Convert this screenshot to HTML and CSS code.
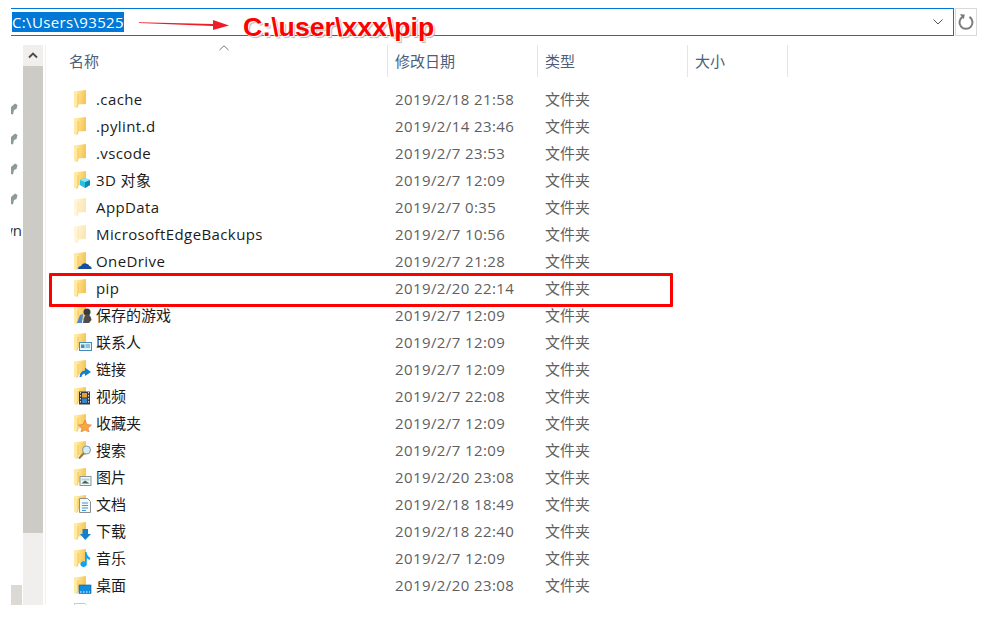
FILE: index.html
```html
<!DOCTYPE html>
<html lang="zh-CN">
<head>
<meta charset="utf-8">
<title>文件资源管理器</title>
<link rel="stylesheet" href="styles.css">
</head>
<body>
<svg class="defs" width="0" height="0" aria-hidden="true">
  <defs>
    <linearGradient id="fg" x1="0" y1="0" x2="1" y2="0.2">
      <stop offset="0" stop-color="#fff0b0"/><stop offset="0.5" stop-color="#fddc7c"/><stop offset="1" stop-color="#f6c45a"/>
    </linearGradient>
    <symbol id="folder" viewBox="0 0 18 18">
      <path d="M0 1.500 L12 0 V14 L4 14.500 L3 17.500 L0 17 Z" fill="url(#fg)"/>
      <path d="M0 1.500 H3.500 L4 4 V14.500 L3 17.500 L0 17 Z" fill="#ffe9a3"/>
      <path d="M4 4 V14.500 L3 17.500" fill="none" stroke="#f3c35a" stroke-width="1"/>
    </symbol>
  </defs>
</svg>
<div class="page">
  <div class="topbar">
    <div class="address">
      <span class="selected">C:\Users\93525</span>
      <svg class="chev" width="12" height="8" viewBox="0 0 12 8"><path d="M1.500 1.500 L6 6 L10.500 1.500" fill="none" stroke="#555" stroke-width="1"/></svg>
    </div>
    <div class="refresh">
      <svg width="18" height="18" viewBox="0 0 18 18"><path d="M5.500 3.800 A6.500 6.500 0 1 0 12.500 3.800" fill="none" stroke="#7b7b7b" stroke-width="2"/><path d="M2.800 1.200 L7.800 1.600 L6.800 6.200 Z" fill="#7b7b7b"/></svg>
    </div>
  </div>

  <div class="main">
    <aside class="nav">
      <div class="pins">
        <svg class="pin" width="8" height="12" viewBox="0 0 8 12"><path d="M1 4 L5 0.500 L7.500 2 L6.500 6 L4 7 L3 11.500 L1 11 Z" fill="#8d9a96"/></svg>
        <svg class="pin" width="8" height="12" viewBox="0 0 8 12"><path d="M1 4 L5 0.500 L7.500 2 L6.500 6 L4 7 L3 11.500 L1 11 Z" fill="#8d9a96"/></svg>
        <svg class="pin" width="8" height="12" viewBox="0 0 8 12"><path d="M1 4 L5 0.500 L7.500 2 L6.500 6 L4 7 L3 11.500 L1 11 Z" fill="#8d9a96"/></svg>
        <svg class="pin" width="8" height="12" viewBox="0 0 8 12"><path d="M1 4 L5 0.500 L7.500 2 L6.500 6 L4 7 L3 11.500 L1 11 Z" fill="#8d9a96"/></svg>
        <div class="navlabel"><span>wn</span></div>
      </div>
      <div class="hthumb"></div>
    </aside>
    <div class="vscroll">
      <div class="vup"><svg width="10" height="7" viewBox="0 0 10 7"><path d="M1 5.500 L5 1.500 L9 5.500" fill="none" stroke="#4a4a4a" stroke-width="1.800"/></svg></div>
      <div class="vthumb"></div>
    </div>
    <section class="list">
      <div class="head">
        <svg class="sortcaret" width="10" height="6" viewBox="0 0 10 6"><path d="M0.500 5 L5 0.800 L9.500 5" fill="none" stroke="#777" stroke-width="1"/></svg>
        <div class="hcell hname">名称</div>
        <div class="hcell">修改日期</div>
        <div class="hcell">类型</div>
        <div class="hcell">大小</div>
      </div>
      <div class="rows">
        <div class="row"><svg class="ico" width="18" height="18"><use href="#folder"/></svg><span class="name">.cache</span><span class="date">2019/2/18 21:58</span><span class="type">文件夹</span></div>
        <div class="row"><svg class="ico" width="18" height="18"><use href="#folder"/></svg><span class="name">.pylint.d</span><span class="date">2019/2/14 23:46</span><span class="type">文件夹</span></div>
        <div class="row"><svg class="ico" width="18" height="18"><use href="#folder"/></svg><span class="name">.vscode</span><span class="date">2019/2/7 23:53</span><span class="type">文件夹</span></div>
        <div class="row"><svg class="ico" width="18" height="18"><use href="#folder"/><path d="M11 7 L16 9 V14 L11 17 L6 14 V9 Z" fill="#27c0e0"/><path d="M11 11 L16 9 V14 L11 17 Z" fill="#0e86b8"/><path d="M6 9 L11 7 L16 9 L11 11 Z" fill="#8fe6f5"/></svg><span class="name">3D 对象</span><span class="date">2019/2/7 12:09</span><span class="type">文件夹</span></div>
        <div class="row"><svg class="ico faded" width="18" height="18"><use href="#folder"/></svg><span class="name">AppData</span><span class="date">2019/2/7 0:35</span><span class="type">文件夹</span></div>
        <div class="row"><svg class="ico faded" width="18" height="18"><use href="#folder"/></svg><span class="name">MicrosoftEdgeBackups</span><span class="date">2019/2/7 10:56</span><span class="type">文件夹</span></div>
        <div class="row"><svg class="ico" width="18" height="18"><use href="#folder"/><path d="M4 17 Q4 14 7 14 Q8.500 10.500 12 11.500 Q15 12 15.500 14 Q18 14.500 17.500 17 Z" fill="#164f9e"/></svg><span class="name">OneDrive</span><span class="date">2019/2/7 21:28</span><span class="type">文件夹</span></div>
        <div class="row"><svg class="ico" width="18" height="18"><use href="#folder"/></svg><span class="name">pip</span><span class="date">2019/2/20 22:14</span><span class="type">文件夹</span></div>
        <div class="row"><svg class="ico" width="18" height="18"><use href="#folder"/><circle cx="13" cy="6" r="3.500" fill="#3b3b3b"/><path d="M9 17 Q10 9 13 8 Q17 9 17.500 14 L15 17 Z" fill="#4c4c4c"/><path d="M3 17 L6 9 L9 8 L8 17 Z" fill="#4d87c7"/></svg><span class="name cjk">保存的游戏</span><span class="date">2019/2/7 12:09</span><span class="type">文件夹</span></div>
        <div class="row"><svg class="ico" width="18" height="18"><use href="#folder"/><rect x="5.500" y="9.500" width="12" height="8" fill="#e8f2f8" stroke="#3f8fb8"/><rect x="7" y="11.500" width="3.500" height="3.500" fill="#3f8fb8"/><path d="M11.500 12 H16 M11.500 14 H16" stroke="#3f8fb8"/></svg><span class="name cjk">联系人</span><span class="date">2019/2/7 12:09</span><span class="type">文件夹</span></div>
        <div class="row"><svg class="ico" width="18" height="18"><use href="#folder"/><path d="M5.500 17 Q6 11 11 10.500 V7.500 L17 12 L11 16 V13.500 Q8 13.500 7.500 17 Z" fill="#1380cf"/></svg><span class="name cjk">链接</span><span class="date">2019/2/7 12:09</span><span class="type">文件夹</span></div>
        <div class="row"><svg class="ico" width="18" height="18"><use href="#folder"/><rect x="5" y="4.500" width="11" height="13" fill="#3a3a3a"/><rect x="8" y="6" width="5" height="4.500" fill="#e2a13d"/><rect x="8" y="11.500" width="5" height="4.500" fill="#3b85c4"/><path d="M6.500 5 V17 M14.500 5 V17" stroke="#d8d8d8" stroke-dasharray="1.500 1.500"/></svg><span class="name cjk">视频</span><span class="date">2019/2/7 22:08</span><span class="type">文件夹</span></div>
        <div class="row"><svg class="ico" width="18" height="18"><use href="#folder"/><path d="M11 6 L13 10.500 L17.500 11 L14 14 L15 18 L11 16 L7 18 L8 14 L4.500 11 L9 10.500 Z" fill="#f7a83a" stroke="#e5723a" stroke-width=".6"/></svg><span class="name cjk">收藏夹</span><span class="date">2019/2/7 12:09</span><span class="type">文件夹</span></div>
        <div class="row"><svg class="ico" width="18" height="18"><use href="#folder"/><path d="M5 17.500 L10 12" stroke="#8a7a55" stroke-width="2"/><circle cx="12.500" cy="9" r="4" fill="#d8ecf6" stroke="#7d97a8"/></svg><span class="name cjk">搜索</span><span class="date">2019/2/7 12:09</span><span class="type">文件夹</span></div>
        <div class="row"><svg class="ico" width="18" height="18"><use href="#folder"/><rect x="6" y="8.500" width="11" height="9" fill="#f4f6f6" stroke="#8d9497"/><path d="M7.500 15.500 L11 12.500 L15.500 15.500 Z" fill="#2d6a55"/><rect x="7.500" y="10.500" width="8" height="2" fill="#b9cfdc"/></svg><span class="name cjk">图片</span><span class="date">2019/2/20 23:08</span><span class="type">文件夹</span></div>
        <div class="row"><svg class="ico" width="18" height="18"><use href="#folder"/><path d="M5.500 3.500 H13.500 L16.500 6.500 V17.500 H5.500 Z" fill="#f5f7f8" stroke="#8a8f92"/><path d="M8 8 H14 M8 10.500 H14 M8 13 H14 M8 15.500 H12" stroke="#3f9ccf"/></svg><span class="name cjk">文档</span><span class="date">2019/2/18 18:49</span><span class="type">文件夹</span></div>
        <div class="row"><svg class="ico" width="18" height="18"><use href="#folder"/><path d="M8.500 7 H14 V12 H17 L11.200 18 L6 12 H8.500 Z" fill="#1380cf"/></svg><span class="name cjk">下载</span><span class="date">2019/2/18 22:40</span><span class="type">文件夹</span></div>
        <div class="row"><svg class="ico" width="18" height="18"><use href="#folder"/><path d="M11 3 H12.500 Q13 7 16.500 9 L15.500 11 Q13.500 10 12.800 9 V15 A3.200 2.800 0 1 1 11 12.600 Z" fill="#10a4f0"/></svg><span class="name cjk">音乐</span><span class="date">2019/2/7 12:09</span><span class="type">文件夹</span></div>
        <div class="row"><svg class="ico" width="18" height="18"><use href="#folder"/><rect x="5" y="9" width="12" height="8.500" fill="#0f8de0" stroke="#0b5d96" stroke-width=".6"/><path d="M6 16 H16" stroke="#fff" stroke-dasharray="1.500 1.500"/></svg><span class="name cjk">桌面</span><span class="date">2019/2/20 23:08</span><span class="type">文件夹</span></div>
        <div class="row"><svg class="ico" width="18" height="18"><path d="M0.500 0.500 H11 L14 3.500 V18 H0.500 Z" fill="#fff" stroke="#c9c9c9"/></svg></div>
      </div>
    </section>
  </div>

  <svg class="arrow" width="92" height="12" viewBox="0 0 92 12"><path d="M0 3.300 L74 5 V1 L90 6.500 L74 11 V7 L0 4 Z" fill="#ee1c25"/></svg>
  <div class="note">C:\user\xxx\pip</div>
  <div class="highlight"></div>
</div>
</body>
</html>
```
FILE: styles.css
```css
* { box-sizing: border-box; }
html, body { margin: 0; padding: 0; background: #fff; }
body { width: 984px; height: 637px; overflow: hidden; font-family: "Open Sans", "Noto Sans CJK SC", sans-serif; }
.defs { position: absolute; }
.page { position: relative; width: 984px; height: 637px; padding-top: 8px; background: #fff; }

.topbar { display: flex; height: 28px; margin-left: 11px; width: 966px; gap: 1px; }
.address { flex: 1; display: flex; align-items: center; justify-content: space-between; border: 1px solid #0078d7; border-left: 0; padding: 0 9px 0 1px; }
.selected { display: block; width: 112px; height: 20px; line-height: 20px; font-size: 15px; letter-spacing: .35px; color: #fff; background: #0078d7; white-space: nowrap; overflow: hidden; font-family: "Open Sans", sans-serif; }
.chev { display: block; }
.refresh { width: 22px; display: flex; align-items: center; justify-content: center; border: 1px solid #d9d9d9; }

.main { display: flex; height: 560px; margin-top: 9px; }
.nav { width: 23px; display: flex; flex-direction: column; justify-content: space-between; }
.pins { padding-top: 58px; display: flex; flex-direction: column; align-items: flex-start; }
.pin { display: block; margin: 0 0 18px 10px; }
.navlabel { width: 11px; margin: -3px 0 0 11px; height: 20px; overflow: hidden; display: flex; justify-content: flex-end; font-size: 15px; line-height: 20px; color: #333; }
.navlabel span { flex: none; }
.hthumb { width: 11px; height: 20px; margin-left: 11px; background: #dcd9d5; }

.vscroll { width: 20px; background: #f0efed; flex: none; }
.vup { height: 21px; display: flex; align-items: center; justify-content: center; }
.vthumb { height: 467px; background: #cdcbc5; }

.list { flex: 1; margin-left: 2px; border-left: 1px solid #f1f1f1; overflow: hidden; position: relative; min-width: 0; }
.head { display: grid; grid-template-columns: 342px 150px 150px 100px; height: 32px; position: relative; }
.hcell { border-right: 1px solid #e5e5e5; padding-left: 7px; font-size: 15px; line-height: 31px; color: #4c607a; font-family: "Noto Sans CJK SC", sans-serif; }
.hname { padding-left: 23px; }
.sortcaret { position: absolute; left: 173px; top: 0; }

.rows { padding-top: 9px; }
.row { display: grid; grid-template-columns: 22px 299px 150px 100px; align-items: center; height: 27px; padding-left: 28px; font-size: 15px; }
.ico { display: block; margin-top: -1px; }
.faded { opacity: .42; }
.name { color: #1b1b1b; white-space: nowrap; font-size: 15px; letter-spacing: .4px; padding-bottom: 2px; }
.name.cjk { letter-spacing: 0; }
.date { color: #5f5f5f; font-size: 15px; letter-spacing: .4px; white-space: nowrap; padding-bottom: 2px; }
.type { color: #5f5f5f; font-size: 15px; padding-bottom: 2px; font-family: "Noto Sans CJK SC", sans-serif; }

.arrow { position: absolute; left: 139px; top: 19px; }
.note { position: absolute; left: 243px; top: 11px; font: bold 26.700px/32px "Liberation Sans", sans-serif; color: #ff0000; white-space: nowrap; text-shadow: 1px 1px 0 #fff, 2px 2px 1px #b9b9b9, -1px 0 0 #fff; }
.highlight { position: absolute; left: 49px; top: 273px; width: 624px; height: 34px; border: 3px solid #ff0000; border-radius: 1px; }
```
